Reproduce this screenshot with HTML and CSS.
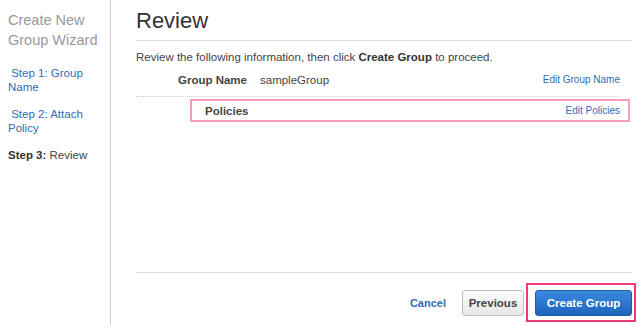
FILE: index.html
```html
<!DOCTYPE html>
<html>
<head>
<meta charset="utf-8">
<link rel="stylesheet" href="styles.css">
</head>
<body>
<div class="wizard">
  <aside class="sidebar">
    <div class="wiz-title">Create New Group Wizard</div>
    <ul class="steps">
      <li class="step"><a class="step-link">&nbsp;Step 1: Group Name</a></li>
      <li class="step"><a class="step-link">&nbsp;Step 2: Attach Policy</a></li>
      <li class="step current"><b>Step 3:</b> Review</li>
    </ul>
  </aside>
  <main class="main">
    <h1 class="title">Review</h1>
    <p class="intro">Review the following information, then click <b>Create Group</b> to proceed.</p>
    <div class="row row-name">
      <span class="label">Group Name</span>
      <span class="value">sampleGroup</span>
      <a class="edit">Edit Group Name</a>
    </div>
    <div class="row row-policies">
      <span class="label-p">Policies</span>
      <a class="edit">Edit Policies</a>
    </div>
    <div class="footer">
      <a class="cancel">Cancel</a>
      <button class="btn btn-prev">Previous</button>
      <span class="highlight"><button class="btn btn-primary">Create Group</button></span>
    </div>
  </main>
</div>
</body>
</html>
```

FILE: styles.css
```css
html, body {
  margin: 0;
  padding: 0;
  background: #fff;
}
body {
  font-family: "Liberation Sans", Arial, sans-serif;
  color: #333;
  font-size: 11.5px;
}
.wizard {
  display: flex;
  height: 325px;
  overflow: hidden;
}
.sidebar {
  width: 111px;
  box-sizing: border-box;
  border-right: 1px solid #d0d0d0;
  padding: 10px 0 0 8px;
  flex-shrink: 0;
}
.wiz-title {
  font-size: 14.5px;
  line-height: 20px;
  color: #999;
  margin-bottom: 16px;
}
.steps {
  list-style: none;
  margin: 0;
  padding: 0;
}
.step {
  font-size: 11.5px;
  line-height: 14px;
  margin-bottom: 13px;
  padding-right: 20px;
}
.step-link {
  color: #2f6db6;
}
.step.current {
  color: #444;
}
.step.current b {
  color: #333;
}
.main {
  flex: 1;
  display: flex;
  flex-direction: column;
  padding: 0 8px 0 25px;
  min-width: 0;
}
.title {
  margin: 8px 0 0;
  font-size: 22px;
  font-weight: normal;
  line-height: 26px;
  color: #333;
  padding-bottom: 6px;
  border-bottom: 1px solid #dcdcdc;
}
.intro {
  margin: 8px 0 0;
  line-height: 16px;
  font-size: 11.5px;
  color: #444;
}
.intro b {
  color: #333;
}
.row {
  display: flex;
  align-items: center;
  line-height: 16px;
}
.row-name {
  margin: 7px 12px 0 0;
  padding-bottom: 8px;
  border-bottom: 1px dotted #cfcfcf;
}
.label {
  width: 111px;
  text-align: right;
  font-weight: bold;
  color: #444;
}
.value {
  margin-left: 13px;
  color: #444;
}
.edit {
  margin-left: auto;
  color: #2f6db6;
  font-size: 10px;
}
.row-policies {
  margin: 2px 2px 0 54px;
  border: 2px solid #f49fbf;
  height: 19px;
  padding: 0 8px 0 13px;
}
.label-p {
  font-weight: bold;
  color: #444;
}
.footer {
  margin-top: auto;
  margin-bottom: 9px;
  border-top: 1px solid #dcdcdc;
  padding-top: 17px;
  display: flex;
  align-items: center;
  justify-content: flex-end;
}
.cancel {
  color: #2f6db6;
  font-weight: bold;
  font-size: 11px;
  margin-right: 16px;
}
.btn {
  font-family: "Liberation Sans", Arial, sans-serif;
  font-weight: bold;
  font-size: 11.5px;
  height: 26px;
  border-radius: 3px;
  padding: 0;
}
.btn-prev {
  width: 62px;
  color: #444;
  border: 1px solid #bdbdbd;
  background: linear-gradient(#fdfdfd, #e6e6e6);
  margin-right: 11px;
}
.highlight {
  position: relative;
  display: inline-flex;
}
.highlight::after {
  content: "";
  position: absolute;
  left: -9px;
  right: -4px;
  top: -7px;
  bottom: -6px;
  border: 2px solid #ee3a76;
}
.btn-primary {
  width: 97px;
  color: #fff;
  border: 1px solid #1f5ea8;
  background: linear-gradient(#3b8ae0, #1d64bb);
}
```
